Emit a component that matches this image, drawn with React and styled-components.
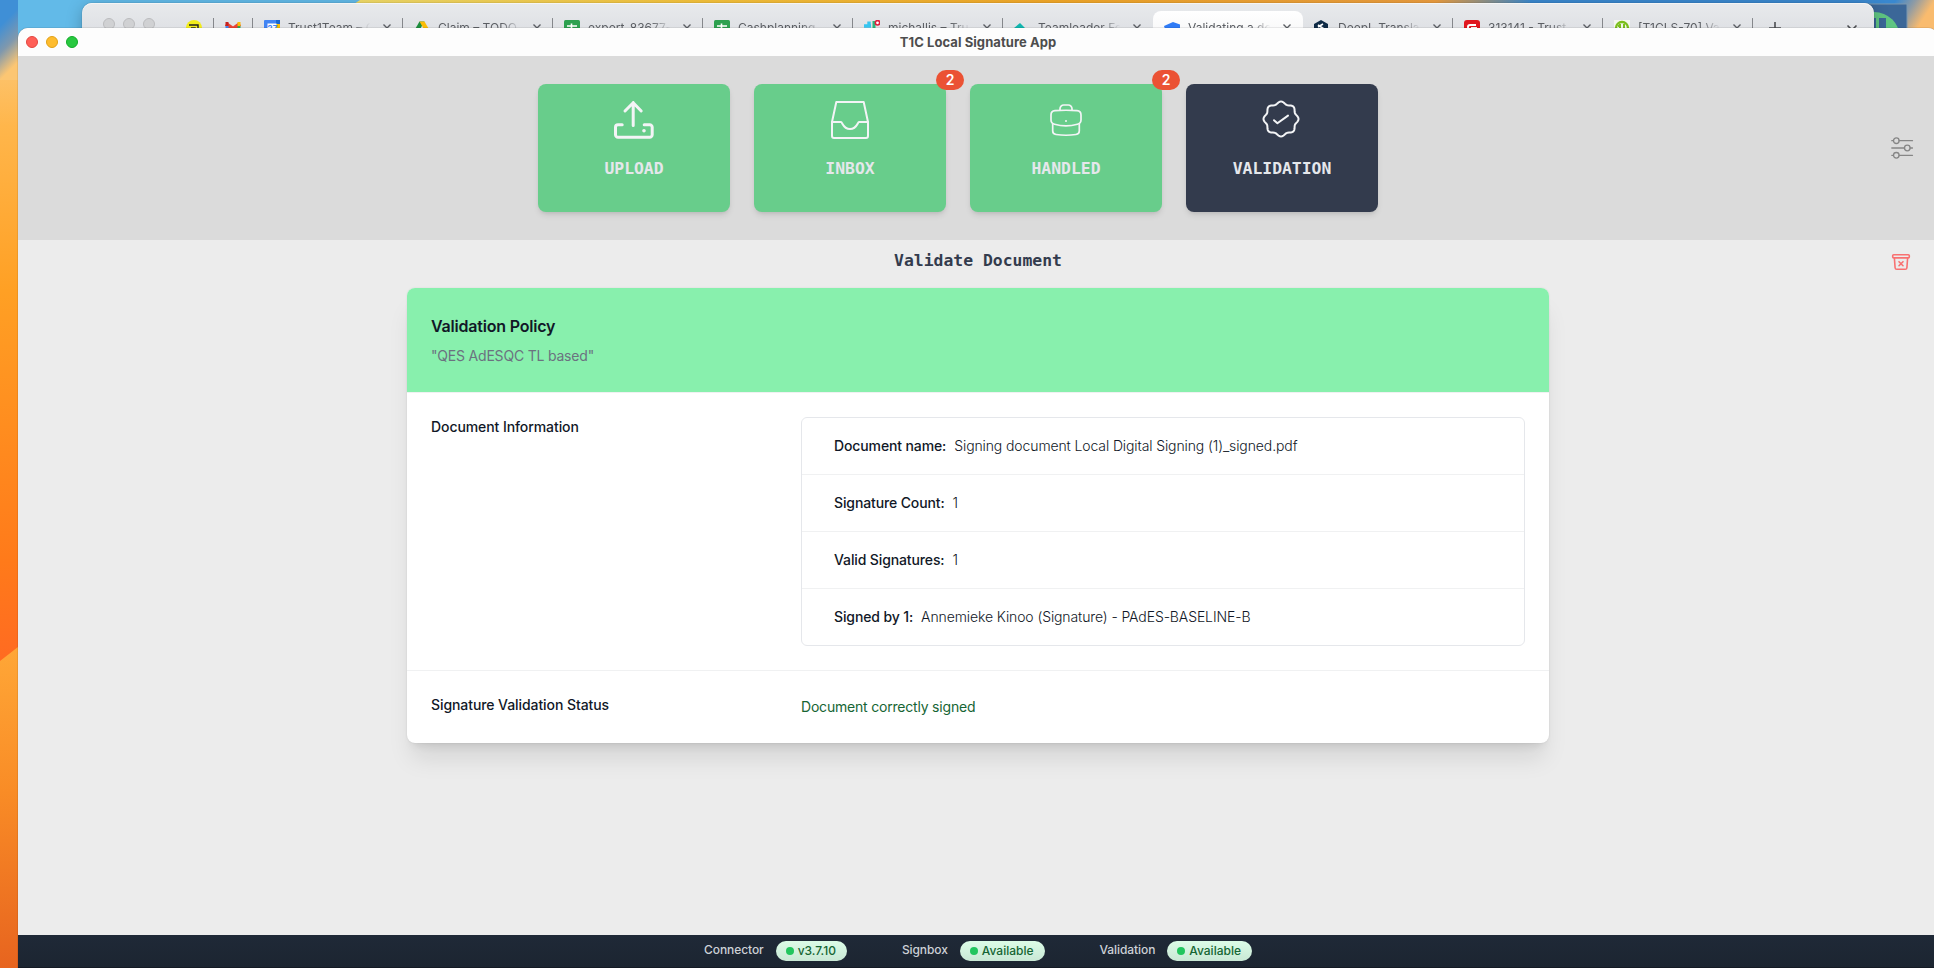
import styled, { createGlobalStyle } from 'styled-components';

const tabs = [
  { title: 'Trust1Team – C', icon: 'calendar' },
  { title: 'Claim – TODO', icon: 'drive' },
  { title: 'export-83677-', icon: 'sheet' },
  { title: 'Cashplanning', icon: 'sheet' },
  { title: 'michallis – Tru', icon: 'slack' },
  { title: 'Teamleader Fo', icon: 'teamleader' },
  { title: 'Validating a do', icon: 'confluence', active: true },
  { title: 'DeepL Transla', icon: 'deepl' },
  { title: '313141 - Trust', icon: 'red' },
  { title: '[T1CLS-70] Va', icon: 'ticket' },
];

const documentInfo = [
  {
    label: 'Document name:',
    value: 'Signing document Local Digital Signing (1)_signed.pdf',
  },
  { label: 'Signature Count:', value: '1' },
  { label: 'Valid Signatures:', value: '1' },
  {
    label: 'Signed by 1:',
    value: 'Annemieke Kinoo (Signature) - PAdES-BASELINE-B',
  },
];

const services = [
  { name: 'Connector', status: 'v3.7.10' },
  { name: 'Signbox', status: 'Available' },
  { name: 'Validation', status: 'Available' },
];

// eight rounded lobes around (23, 23)
const badgePath = () => {
  const points = [];
  for (let deg = 0; deg < 360; deg += 3) {
    const a = (deg * Math.PI) / 180;
    const r = 16.3 + 1.2 * Math.cos(8 * a);
    points.push(
      `${(23 + r * Math.cos(a)).toFixed(2)} ${(23 + r * Math.sin(a)).toFixed(2)}`
    );
  }
  return `M${points.join('L')}Z`;
};

const UploadIcon = () => (
  <TileIcon viewBox="0 0 48 48" $width={3}>
    <path d="M23.2 29.5V6.5M15 15l8.2-8.3 8 8.3" />
    <path d="M12.2 28.8H8a2.5 2.5 0 0 0-2.5 2.5v7.4A2.5 2.5 0 0 0 8 41.2h31.7a2.5 2.5 0 0 0 2.5-2.5v-7.4a2.5 2.5 0 0 0-2.5-2.5h-5.5" />
    <circle cx="34" cy="34.8" r="1.8" fill="currentColor" stroke="none" />
  </TileIcon>
);

const InboxIcon = () => (
  <TileIcon viewBox="0 0 48 48" $width={2}>
    <path d="M10.3 6h27.4L42 26v14a2 2 0 0 1-2 2H8a2 2 0 0 1-2-2V26z" />
    <path d="M6 26h9c1.5 0 2 7 9 7s7.5-7 9-7h9" />
  </TileIcon>
);

const HandledIcon = () => (
  <TileIcon viewBox="0 0 48 48" $width={1.7}>
    <path d="M18 14v-1.3A3.7 3.7 0 0 1 21.7 9h4.6a3.7 3.7 0 0 1 3.7 3.7V14" />
    <path d="M9 19c0-2.7 1.4-4.1 4-4.3 7-.6 15-.6 22 0 2.6.2 4 1.6 4 4.3v5c0 2.3-1.2 3.6-3.6 4.2-8 2.2-15 2.2-22.8 0C10.2 27.6 9 26.3 9 24z" />
    <path d="M10.7 28v7c0 2 1 3.2 3.3 3.5 6 .9 14 .9 20 0 2.3-.3 3.3-1.5 3.3-3.5v-7" />
    <circle cx="24" cy="25" r="1" fill="currentColor" stroke="none" />
  </TileIcon>
);

const ValidationIcon = () => (
  <TileIcon viewBox="0 0 48 48" $width={2}>
    <path d={badgePath()} />
    <path d="M16 24.2l3.4 3L30 19.6" />
  </TileIcon>
);

const SettingsIcon = () => (
  <SmallIcon viewBox="0 0 24 24" $color="#868686" $width={1.3}>
    <path d="M1.8 4.7h1.7M9.1 4.7h13.4M1.8 12h12.7M20.1 12h2.4M1.8 19.3h1.7M9.1 19.3h13.4" />
    <circle cx="6.3" cy="4.7" r="2.8" />
    <circle cx="17.3" cy="12" r="2.8" />
    <circle cx="6.3" cy="19.3" r="2.8" />
  </SmallIcon>
);

const ClearIcon = () => (
  <SmallIcon viewBox="0 0 24 24" $color="#f87171" $width={1.6}>
    <rect x="3.7" y="4.7" width="16.6" height="3.2" rx="1" />
    <path d="M5.4 8.3l.7 9.4a1.7 1.7 0 0 0 1.7 1.6h8.4a1.7 1.7 0 0 0 1.7-1.6l.7-9.4" />
    <path d="M10 11.7l4 4M14 11.7l-4 4" />
  </SmallIcon>
);

const favicons = {
  calendar: (
    <>
      <rect width="16" height="16" rx="1" fill="#4285f4" />
      <rect x="12" width="4" height="16" fill="#fbbc04" />
      <rect x="12" width="4" height="4" fill="#1967d2" />
      <rect x="3.5" y="3.5" width="9" height="11" fill="#fff" />
      <text x="3.6" y="11" fontSize="8" fontWeight="700" fill="#4285f4">
        27
      </text>
    </>
  ),
  drive: (
    <>
      <path d="M5.5 1.5h5L5 11 2.6 15 0 11z" fill="#1e8e3e" />
      <path d="M5.5 1.5h5L16 11h-5z" fill="#fbbc04" />
      <path d="M0 11h16l-3 4H3z" fill="#4285f4" />
    </>
  ),
  sheet: (
    <>
      <rect width="16" height="16" rx="1.5" fill="#2da14f" />
      <path d="M3 6h10M7.5 3.5V16" stroke="#fff" strokeWidth="1.6" />
    </>
  ),
  slack: (
    <>
      <path d="M0 6h7M5 1.5v4" stroke="#36c5f0" strokeWidth="3.4" />
      <path d="M10 1v8" stroke="#2eb67d" strokeWidth="3" />
      <circle cx="13.5" cy="2.8" r="2.2" fill="#fff" stroke="#e01e3c" strokeWidth="1.6" />
    </>
  ),
  teamleader: <path d="M6 3l5 5v4H0V8z" fill="#11b5ae" />,
  confluence: <path d="M0 6l9-4 7 2.5V9H1z" fill="#2f7bf6" />,
  deepl: (
    <>
      <path d="M7 0l7 4v8l-7 4-7-4V4z" fill="#0f2b46" />
      <path d="M4 5l6 4M9 4L4 7" stroke="#fff" strokeWidth="1.6" />
    </>
  ),
  red: (
    <>
      <rect width="16" height="16" rx="3" fill="#e0161e" />
      <path d="M12 5H6a2 2 0 0 0-2 2v4M7 8h6" stroke="#fff" strokeWidth="2" fill="none" />
    </>
  ),
  ticket: (
    <>
      <rect width="16" height="16" fill="#f4f6ee" />
      <circle cx="8" cy="8" r="6" fill="none" stroke="#7cbf1d" strokeWidth="2.4" />
      <path d="M6 4v6M10 4v6M4 6h3" stroke="#7cbf1d" strokeWidth="2" />
    </>
  ),
};

const BrowserWindow = () => (
  <Browser>
    <BrowserLights>
      <BrowserLight />
      <BrowserLight />
      <BrowserLight />
    </BrowserLights>
    <PinnedTab $width={38}>
      <Favicon viewBox="0 0 16 16">
        <circle cx="8" cy="8" r="8" fill="#f2ec1a" />
        <path d="M3 5h9v6M5 8h4v3" stroke="#222" strokeWidth="1.5" fill="none" />
      </Favicon>
    </PinnedTab>
    <PinnedTab $width={39}>
      <Favicon viewBox="0 0 16 16">
        <path d="M1 4l7 5 7-5" stroke="#ea4335" strokeWidth="4" fill="none" />
        <path d="M2 2v4" stroke="#c5221f" strokeWidth="3" />
        <path d="M14 2v4" stroke="#fbbc04" strokeWidth="3" />
        <path d="M2 6v8" stroke="#4285f4" strokeWidth="3" />
        <path d="M14 6v8" stroke="#34a853" strokeWidth="3" />
      </Favicon>
    </PinnedTab>
    {tabs.map((tab, i) => (
      <Tab
        key={tab.title}
        $active={tab.active}
        $bare={tab.active || tabs[i + 1]?.active}
      >
        <Favicon viewBox="0 0 16 16">{favicons[tab.icon]}</Favicon>
        <TabTitle>{tab.title}</TabTitle>
        <TabGlyph viewBox="0 0 8 8">
          <path d="M.5.5l7 7M7.5.5l-7 7" />
        </TabGlyph>
      </Tab>
    ))}
    <BrowserTools>
      <ToolGlyph viewBox="0 0 12 12">
        <path d="M6 0v12M0 6h12" />
      </ToolGlyph>
      <ToolGlyph viewBox="0 0 12 12">
        <path d="M1.5 3.5L6 8l4.5-4.5" />
      </ToolGlyph>
    </BrowserTools>
  </Browser>
);

function App() {
  return (
    <Desktop>
      <GlobalStyle />
      <Wallpaper viewBox="0 0 1934 968" preserveAspectRatio="none">
        <defs>
          <linearGradient id="side" x1="0" y1="0" x2="0" y2="1">
            <stop offset="0.06" stopColor="#fcc673" />
            <stop offset="0.13" stopColor="#ffb64b" />
            <stop offset="0.3" stopColor="#ffa024" />
            <stop offset="0.58" stopColor="#ff7a1a" />
            <stop offset="0.68" stopColor="#ff6b21" />
          </linearGradient>
          <linearGradient id="sideLow" x1="0" y1="0" x2="0" y2="1">
            <stop offset="0" stopColor="#ffa737" />
            <stop offset="0.45" stopColor="#f98c26" />
            <stop offset="1" stopColor="#e7641f" />
          </linearGradient>
          <linearGradient
            id="corner"
            gradientUnits="userSpaceOnUse"
            x1="0"
            y1="26"
            x2="30"
            y2="56"
          >
            <stop offset="0" stopColor="#3f8fd6" />
            <stop offset="0.45" stopColor="#7f98ad" />
            <stop offset="0.9" stopColor="#fcc673" />
          </linearGradient>
          <linearGradient id="top" x1="0" y1="0" x2="1" y2="0">
            <stop offset="0" stopColor="#f3de6b" />
            <stop offset="0.3" stopColor="#f8c53c" />
            <stop offset="0.6" stopColor="#f5aa29" />
            <stop offset="0.92" stopColor="#ee9f3f" />
            <stop offset="1" stopColor="#3f8bcd" />
          </linearGradient>
          <linearGradient
            id="right"
            gradientUnits="userSpaceOnUse"
            x1="1896"
            y1="0"
            x2="1924"
            y2="18"
          >
            <stop offset="0" stopColor="#3988cf" />
            <stop offset="0.5" stopColor="#8f9ba4" />
            <stop offset="1" stopColor="#f9bb6e" />
          </linearGradient>
        </defs>
        <rect width="18" height="968" fill="url(#side)" />
        <rect width="18" height="80" fill="url(#corner)" />
        <path d="M0 661l18-14v321H0z" fill="url(#sideLow)" />
        <rect x="18" width="345" height="60" fill="#62bae8" />
        <path d="M360 0h1170v10H345z" fill="url(#top)" />
        <rect x="1530" width="345" height="30" fill="#3b89cf" />
        <rect x="1874" width="60" height="40" fill="url(#right)" />
        <rect
          x="1860"
          y="4"
          width="47"
          height="30"
          fill="#3b6798"
          stroke="#7d98ae"
        />
        <circle cx="1874" cy="38" r="26" fill="#5fc583" />
        <path d="M1874 18h2v12h-2zM1879 18h7v12h-7z" fill="#3b6798" />
      </Wallpaper>
      <BrowserWindow />
      <Window>
        <TitleBar>
          <Lights>
            <Light $color="#ff5f57" $edge="#e2463f" />
            <Light $color="#febc2e" $edge="#e1a116" />
            <Light $color="#28c840" $edge="#12ac28" />
          </Lights>
          <WindowTitle>T1C Local Signature App</WindowTitle>
        </TitleBar>
        <Nav>
          <Tiles>
            <Tile>
              <UploadIcon />
              <TileLabel>UPLOAD</TileLabel>
            </Tile>
            <Tile>
              <InboxIcon />
              <TileLabel>INBOX</TileLabel>
              <Badge>2</Badge>
            </Tile>
            <Tile>
              <HandledIcon />
              <TileLabel>HANDLED</TileLabel>
              <Badge>2</Badge>
            </Tile>
            <Tile $active>
              <ValidationIcon />
              <TileLabel>VALIDATION</TileLabel>
            </Tile>
          </Tiles>
          <SettingsIcon />
        </Nav>
        <Main>
          <Heading>
            <PageTitle>Validate Document</PageTitle>
            <ClearIcon />
          </Heading>
          <Card>
            <CardHeader>
              <PolicyTitle>Validation Policy</PolicyTitle>
              <PolicyName>"QES AdESQC TL based"</PolicyName>
            </CardHeader>
            <Section>
              <Term>Document Information</Term>
              <InfoList>
                {documentInfo.map((info) => (
                  <InfoItem key={info.label}>
                    <InfoLabel>{info.label}</InfoLabel>
                    <InfoValue>{info.value}</InfoValue>
                  </InfoItem>
                ))}
              </InfoList>
            </Section>
            <Section>
              <Term>Signature Validation Status</Term>
              <Status>Document correctly signed</Status>
            </Section>
          </Card>
        </Main>
        <Footer>
          {services.map((service) => (
            <Service key={service.name}>
              <ServiceName>{service.name}</ServiceName>
              <Pill>
                <Dot />
                {service.status}
              </Pill>
            </Service>
          ))}
        </Footer>
      </Window>
    </Desktop>
  );
}

export default App;

const GlobalStyle = createGlobalStyle`
  * {
    box-sizing: border-box;
    margin: 0;
    padding: 0;
  }
  body {
    font-family: Inter, 'Liberation Sans', sans-serif;
    overflow: hidden;
  }
`;

const mono = "'DejaVu Sans Mono', 'Liberation Mono', monospace";

const Desktop = styled.div`
  position: relative;
  width: 100vw;
  height: 100vh;
  overflow: hidden;
  background: #62bae8;
`;

const Wallpaper = styled.svg`
  position: absolute;
  inset: 0;
  width: 100%;
  height: 100%;
`;

const Browser = styled.div`
  position: absolute;
  left: 82px;
  top: 3px;
  width: 1792px;
  height: 60px;
  display: flex;
  padding-top: 8px;
  border-radius: 10px;
  background: linear-gradient(#e8eaec, #dfe1e5 26px);
  box-shadow: 0 0 1px rgba(0, 0, 0, 0.5), 0 4px 16px rgba(0, 0, 0, 0.25),
    inset 0 1px 0 #f5f5f4;
`;

const BrowserLights = styled.div`
  display: flex;
  gap: 8px;
  width: 94px;
  padding: 7px 0 0 21px;
`;

const BrowserLight = styled.span`
  width: 12px;
  height: 12px;
  border-radius: 50%;
  background: #d0d1d3;
  border: 1px solid #bbbcbe;
`;

const PinnedTab = styled.div`
  width: ${(props) => props.$width}px;
  height: 32px;
  padding: 9px 2px 0 0;
  display: flex;
  justify-content: center;
  background: linear-gradient(#85878b, #85878b) right 7px / 1px 20px no-repeat;
`;

const Tab = styled.div`
  display: flex;
  width: 150px;
  height: 32px;
  padding: 9px 0 0 11px;
  border-radius: 8px 8px 0 0;
  color: #5b5e63;
  background: ${(props) =>
    props.$active
      ? 'linear-gradient(#fff, #f4f4f5)'
      : props.$bare
        ? 'none'
        : 'linear-gradient(#85878b, #85878b) right 7px / 1px 20px no-repeat'};
`;

const Favicon = styled.svg`
  width: 16px;
  height: 16px;
  flex: none;
`;

const TabTitle = styled.span`
  width: 84px;
  margin-left: 8px;
  font-size: 12px;
  line-height: 16px;
  white-space: nowrap;
  overflow: hidden;
  mask-image: linear-gradient(to right, #000 75%, transparent 98%);
`;

const TabGlyph = styled.svg`
  width: 8px;
  height: 8px;
  margin: 4px 0 0 11px;
  stroke: #5b5e63;
  stroke-width: 1.4;
  fill: none;
`;

const BrowserTools = styled.div`
  flex: 1;
  display: flex;
  justify-content: space-between;
  padding: 11px 16px 0;
`;

const ToolGlyph = styled.svg`
  width: 12px;
  height: 12px;
  stroke: #4b4d51;
  stroke-width: 1.6;
  fill: none;
`;

const Window = styled.div`
  position: absolute;
  left: 18px;
  top: 28px;
  width: 1920px;
  height: 940px;
  display: flex;
  flex-direction: column;
  border-radius: 10px 10px 0 0;
  overflow: hidden;
  background: #ececec;
  box-shadow: 0 0 1px rgba(0, 0, 0, 0.7);
`;

const TitleBar = styled.header`
  flex: none;
  height: 28px;
  display: grid;
  grid-template-columns: 1fr auto 1fr;
  align-items: center;
  padding: 0 8px;
  background: #fdfdfd;
`;

const Lights = styled.div`
  display: flex;
  gap: 8px;
`;

const Light = styled.span`
  width: 12px;
  height: 12px;
  border-radius: 50%;
  background: ${(props) => props.$color};
  border: 1px solid ${(props) => props.$edge};
`;

const WindowTitle = styled.h1`
  padding-bottom: 1px;
  font-size: 13px;
  font-weight: 700;
  line-height: 16px;
  letter-spacing: 0.07px;
  color: #4d4d4d;
`;

const Nav = styled.nav`
  flex: none;
  height: 184px;
  display: flex;
  align-items: center;
  padding-right: 24px;
  background: #dbdbdb;
`;

const Tiles = styled.div`
  flex: 1;
  display: flex;
  justify-content: center;
  gap: 24px;
  margin-right: -8px;
`;

const Tile = styled.div`
  position: relative;
  width: 192px;
  height: 128px;
  display: flex;
  flex-direction: column;
  align-items: center;
  padding-top: 12px;
  border-radius: 8px;
  background: ${(props) => (props.$active ? '#333b4d' : '#68cd8b')};
  box-shadow: 0 4px 6px -1px rgba(0, 0, 0, 0.1),
    0 2px 4px -2px rgba(0, 0, 0, 0.1);
`;

const TileIcon = styled.svg`
  width: 48px;
  height: 48px;
  color: #f3f4f6;
  fill: none;
  stroke: currentColor;
  stroke-width: ${(props) => props.$width};
  stroke-linecap: round;
  stroke-linejoin: round;
`;

const TileLabel = styled.span`
  margin-top: 13px;
  font-family: ${mono};
  font-size: 16.4px;
  font-weight: 700;
  line-height: 24px;
  color: #e5e7eb;
`;

const Badge = styled.span`
  position: absolute;
  top: -14px;
  right: -18px;
  width: 28px;
  height: 20px;
  border-radius: 10px;
  background: #eb5234;
  color: #fff;
  font-size: 14px;
  font-weight: 600;
  line-height: 20px;
  text-align: center;
`;

const SmallIcon = styled.svg`
  width: 24px;
  height: 24px;
  flex: none;
  fill: none;
  stroke: ${(props) => props.$color};
  stroke-width: ${(props) => props.$width};
  stroke-linecap: round;
  stroke-linejoin: round;
`;

const Main = styled.main`
  flex: 1;
`;

const Heading = styled.div`
  height: 48px;
  display: grid;
  grid-template-columns: 1fr auto 1fr;
  align-items: start;
  padding: 9px 25px 0;

  svg {
    grid-column: 3;
    justify-self: end;
    margin-top: 1px;
  }
`;

const PageTitle = styled.h2`
  grid-column: 2;
  font-family: ${mono};
  font-size: 16.4px;
  font-weight: 700;
  line-height: 24px;
  color: #333b4d;
`;

const Card = styled.section`
  width: 1142px;
  margin: 0 auto;
  border-radius: 8px;
  overflow: hidden;
  background: #fff;
  color: #111827;
  box-shadow: 0 20px 25px -5px rgba(0, 0, 0, 0.1),
    0 8px 10px -6px rgba(0, 0, 0, 0.1), 0 0 2px rgba(0, 0, 0, 0.1);
`;

const CardHeader = styled.div`
  height: 104px;
  padding: 26px 24px;
  background: #88f0ad;
`;

const PolicyTitle = styled.h3`
  font-size: 16px;
  font-weight: 600;
  line-height: 24px;
  letter-spacing: -0.2px;
`;

const PolicyName = styled.p`
  margin-top: 8px;
  font-size: 14px;
  line-height: 20px;
  letter-spacing: -0.2px;
  color: #6b7280;
`;

const Section = styled.div`
  display: grid;
  grid-template-columns: repeat(3, 1fr);
  gap: 16px;
  padding: 24px;
  border-top: 1px solid #f0f1f2;
`;

const Term = styled.div`
  font-size: 14px;
  font-weight: 500;
  line-height: 20px;
  letter-spacing: -0.08px;
`;

const InfoList = styled.ul`
  grid-column: span 2;
  list-style: none;
  border: 1px solid #e5e7eb;
  border-radius: 6px;
`;

const InfoItem = styled.li`
  display: flex;
  align-items: center;
  gap: 8px;
  height: 56px;
  padding: 0 0 2px 32px;
  font-size: 14px;

  & + & {
    height: 57px;
    border-top: 1px solid #f0f1f2;
  }
`;

const InfoLabel = styled.span`
  font-weight: 500;
  letter-spacing: -0.12px;
`;

const InfoValue = styled.span`
  font-weight: 300;
  letter-spacing: -0.11px;
`;

const Status = styled.p`
  grid-column: span 2;
  font-size: 14px;
  line-height: 24px;
  letter-spacing: -0.2px;
  color: #166534;
`;

const Footer = styled.footer`
  flex: none;
  height: 33px;
  display: flex;
  justify-content: center;
  gap: 55px;
  padding-top: 6px;
  background: linear-gradient(#1f2937, #1c2531);
  border-bottom: 1px solid #141a24;
`;

const Service = styled.div`
  display: flex;
  align-items: center;
  gap: 12px;
  height: 20px;
  font-size: 12px;
  line-height: 18px;
`;

const ServiceName = styled.span`
  padding-bottom: 2px;
  font-weight: 500;
  color: #cdd1d7;
  letter-spacing: -0.08px;
`;

const Pill = styled.span`
  display: flex;
  align-items: center;
  gap: 4px;
  height: 20px;
  padding: 0 11px 1px 10px;
  border-radius: 10px;
  background: linear-gradient(#dcfce7, #c9e8d5);
  color: #166534;
  font-weight: 500;
`;

const Dot = styled.span`
  width: 8px;
  height: 8px;
  margin-top: 1px;
  border-radius: 50%;
  background: #22c55e;
`;
